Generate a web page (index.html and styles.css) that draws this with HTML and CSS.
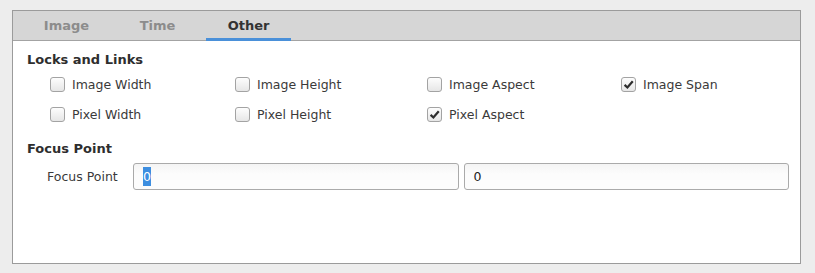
FILE: index.html
```html
<!DOCTYPE html>
<html lang="en">
<head>
    <meta charset="UTF-8">
    <title>Other</title>
    <link rel="stylesheet" href="styles.css">
</head>
<body>
    <div class="frame">
        <div class="tabs">
            <div class="tab">Image</div>
            <div class="tab">Time</div>
            <div class="tab active">Other</div>
        </div>
        <div class="page">
            <h3>Locks and Links</h3>
            <div class="checks">
                <label class="check"><span class="box"></span>Image Width</label>
                <label class="check"><span class="box"></span>Image Height</label>
                <label class="check"><span class="box"></span>Image Aspect</label>
                <label class="check"><span class="box"><svg viewBox="0 0 14 14"><path d="M2.8 7.4 L5.8 10.2 L11.6 3.4" /></svg></span>Image Span</label>
                <label class="check"><span class="box"></span>Pixel Width</label>
                <label class="check"><span class="box"></span>Pixel Height</label>
                <label class="check"><span class="box"><svg viewBox="0 0 14 14"><path d="M2.8 7.4 L5.8 10.2 L11.6 3.4" /></svg></span>Pixel Aspect</label>
            </div>

            <h3 class="second">Focus Point</h3>
            <div class="focus-row">
                <span class="focus-label">Focus Point</span>
                <div class="field"><span class="sel">0</span></div>
                <div class="field">0</div>
            </div>
        </div>
    </div>
</body>
</html>
```

FILE: styles.css
```css
body {
    margin: 0;
    padding: 10px 14px 9px 12px;
    background: #ededed;
    font-family: "DejaVu Sans", Verdana, sans-serif;
    font-size: 12.5px;
    color: #3a3a3a;
}
.frame {
    height: 252px;
    border: 1px solid #9b9b9b;
    background: #fff;
    display: flex;
    flex-direction: column;
}
.tabs {
    height: 29px;
    background: #d6d6d6;
    border-bottom: 1px solid #a3a3a3;
    display: flex;
    gap: 6px;
    padding-left: 11px;
}
.tab {
    width: 85px;
    height: 30px;
    box-sizing: border-box;
    padding-top: 1px;
    margin-bottom: -1px;
    text-align: center;
    line-height: 27px;
    font-weight: bold;
    font-size: 13px;
    color: #8c8c8c;
    border-bottom: 3px solid transparent;
}
.tab.active {
    color: #333;
    border-bottom-color: #4a90d9;
}
.page {
    padding: 11px 11px 0 14px;
}
h3 {
    margin: 0;
    font-size: 13px;
    line-height: 16px;
    font-weight: bold;
    color: #2e2e2e;
}
h3.second {
    margin-top: 12px;
}
.checks {
    display: grid;
    grid-template-columns: 185px 192px 194px auto;
    padding-left: 23px;
    margin-top: 1px;
}
.check {
    display: flex;
    align-items: center;
    gap: 7px;
    height: 30px;
}
.box {
    width: 13px;
    height: 13px;
    border: 1px solid #a3a3a3;
    border-radius: 3px;
    background: linear-gradient(#fdfdfd, #e6e6e6);
    display: flex;
    align-items: center;
    justify-content: center;
}
.box svg {
    width: 15px;
    height: 15px;
    fill: none;
    stroke: #2d2d2d;
    stroke-width: 2.4;
}
.focus-row {
    display: flex;
    align-items: center;
    margin-top: 6px;
    padding-left: 20px;
}
.focus-label {
    width: 86px;
}
.field {
    flex: 1;
    height: 25px;
    border: 1px solid #aaa;
    border-radius: 3px;
    background: linear-gradient(#f4f4f4, #fcfcfc 40%);
    margin-right: 5px;
    padding-left: 9px;
    line-height: 25px;
    color: #222;
}
.field:last-child {
    margin-right: 0;
}
.sel {
    background: #3d8ee0;
    color: #fff;
    padding: 2px 0;
}
```
